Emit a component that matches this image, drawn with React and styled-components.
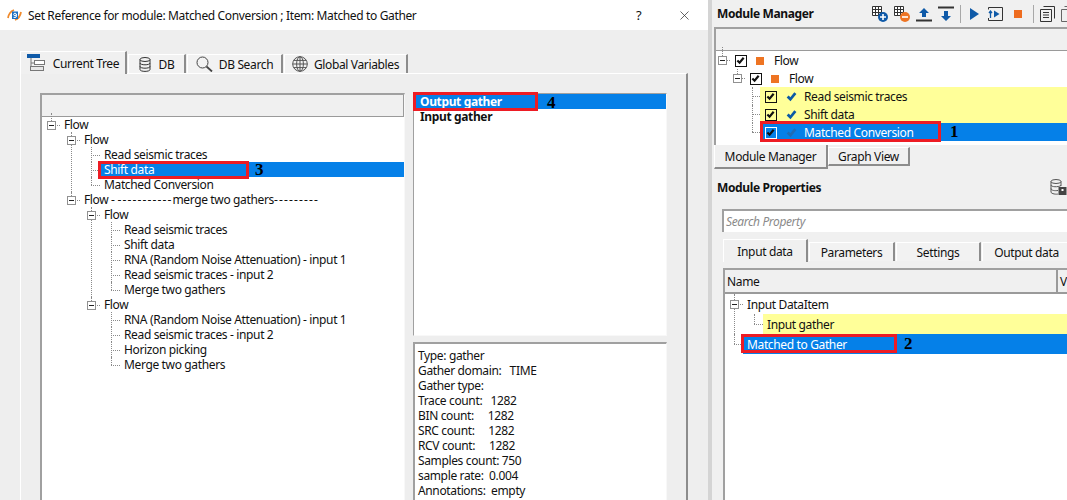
import React from 'react';
import styled, { createGlobalStyle } from 'styled-components';
import { X } from 'lucide-react';

const BLUE = '#0580e8';
const YELLOW = '#ffff99';
const RED = '#ed1c24';
const SUNKEN = '#a0a0a0';

const GlobalStyle = createGlobalStyle`
  html, body { margin: 0; padding: 0; background: #eee; }
  body {
    font-family: "Noto Sans", "Open Sans", sans-serif;
    font-size: 12px;
    letter-spacing: -0.36px;
    color: #111;
  }
  * { box-sizing: border-box; }
`;

const Page = styled.div`
  display: flex;
  width: 1067px;
  height: 500px;
  overflow: hidden;
`;

/* ---- left dialog ---- */

const Dialog = styled.div`
  flex: 0 0 708px;
  min-width: 0;
  background: #eee;
`;

const TitleBar = styled.div`
  display: flex;
  align-items: center;
  height: 30px;
  padding-left: 7px;
  background: #fff;
`;

const TitleText = styled.span`
  margin-left: 6px;
  flex: 1;
`;

const HelpMark = styled.span`
  width: 41px;
  font-size: 13px;
`;

const CloseButton = styled.span`
  display: flex;
  width: 31px;
  color: #333;
`;

const DialogBody = styled.div`
  padding: 20px 20px 0;
`;

const TabBar = styled.div`
  display: flex;
  align-items: flex-end;
  height: 23px;
`;

const Tab = styled.div`
  display: flex;
  align-items: center;
  justify-content: center;
  gap: ${p => p.$gap || 6}px;
  width: ${p => p.$width}px;
  height: ${p => (p.$active ? 23 : 19)}px;
  margin-right: 1px;
  background: ${p => (p.$active ? '#f0f0f0' : '#f2f2f2')};
  border-top: 1px solid #fff;
  border-left: 1px solid #fff;
  border-right: 2px solid #8c8c8c;
  position: relative;
  top: ${p => (p.$active ? 1 : 0)}px;
`;

const TabPane = styled.div`
  display: flex;
  gap: 8px;
  height: 460px;
  padding: 19px 19px 0;
  border-top: 1px solid #fff;
  border-left: 1px solid #fff;
  border-right: 2px solid #8c8c8c;
`;

const SunkenPanel = styled.div`
  background: #fff;
  border-top: 2px solid ${SUNKEN};
  border-left: 2px solid ${SUNKEN};
  border-right: 1px solid #f8f8f8;
  border-bottom: 1px solid #f8f8f8;
  overflow: hidden;
`;

const TreePanel = styled(SunkenPanel)`
  flex: 0 0 365px;
  height: 440px;
`;

const HeaderStrip = styled.div`
  height: 22px;
  background: #f0f0f0;
  border-right: 1px solid #9a9a9a;
  border-bottom: 1px solid #9a9a9a;
`;

const TreeBody = styled.div`
  padding-left: 2px;
`;

const ManagerTree = styled.div`
  margin-left: -1px;
`;

const MiddleColumn = styled.div`
  display: flex;
  flex-direction: column;
  gap: 6px;
  flex: 0 0 254px;
`;

const OutputList = styled(SunkenPanel)`
  height: 243px;
  overflow: visible;
  border-top-width: 1px;
  border-left-width: 1px;
`;

const OutputItem = styled.div`
  position: relative;
  height: 15px;
  line-height: 15px;
  padding-left: 6px;
  font-weight: 700;
  background: ${p => (p.$selected ? BLUE : 'transparent')};
  color: ${p => (p.$selected ? '#fff' : '#111')};
`;

const InfoPanel = styled(SunkenPanel)`
  flex: 1;
  padding: 4px 3px;
`;

const InfoLine = styled.div`
  height: 15px;
  line-height: 15px;
  white-space: pre;
`;

/* ---- callouts ---- */

const RedBox = styled.span`
  position: absolute;
  left: ${p => p.$left}px;
  top: ${p => p.$top}px;
  width: ${p => p.$width}px;
  height: ${p => p.$height}px;
  border: 3px solid ${RED};
  pointer-events: none;
`;

const StepNumber = styled.span`
  position: absolute;
  left: ${p => p.$left}px;
  top: 50%;
  transform: translateY(-50%);
  font-family: "Liberation Serif", serif;
  font-size: 17px;
  font-weight: 700;
  letter-spacing: 0;
  color: #000;
`;

/* ---- tree ---- */

const NodeWrap = styled.div`
  position: relative;
  &::before {
    content: "";
    position: absolute;
    left: ${p => p.$m.axis}px;
    top: ${p => (p.$root ? -4 : 0)}px;
    height: ${p => (p.$last ? `${p.$m.row / 2}px` : '100%')};
    border-left: 1px dotted #8a8a8a;
  }
`;

const NodeRow = styled.div`
  position: relative;
  display: flex;
  align-items: stretch;
  height: ${p => p.$m.row}px;
`;

const Gutter = styled.div`
  position: relative;
  flex: 0 0 ${p => p.$m.gutter}px;
  &::after {
    content: "";
    position: absolute;
    left: ${p => p.$m.axis}px;
    right: 0;
    top: 50%;
    border-top: 1px dotted #8a8a8a;
  }
`;

const Toggle = styled.span`
  position: absolute;
  z-index: 1;
  left: ${p => p.$m.axis - 4}px;
  top: 50%;
  width: 9px;
  height: 9px;
  margin-top: -4px;
  background: #fff;
  border: 1px solid #919191;
  &::after {
    content: "";
    position: absolute;
    left: 1px;
    right: 1px;
    top: 3px;
    border-top: 1px solid #222;
  }
`;

const NodeLabel = styled.div`
  position: relative;
  flex: 1;
  display: flex;
  align-items: center;
  min-width: 0;
  white-space: nowrap;
  padding-left: ${p => p.$m.pad}px;
  padding-top: ${p => p.$m.nudge || 0}px;
  background: ${p => (p.$state === 'selected' ? BLUE : p.$state === 'warn' ? YELLOW : 'transparent')};
  color: ${p => (p.$state === 'selected' ? '#fff' : '#111')};
`;

const NodeChildren = styled.div`
  margin-left: ${p => p.$m.indent}px;
`;

const CheckBox = styled.span`
  display: inline-flex;
  flex: 0 0 12px;
  width: 12px;
  height: 12px;
  margin-right: 9px;
  background: ${p => (p.$state ? 'transparent' : '#fff')};
  border: 1.5px solid ${p => (p.$state === 'selected' ? '#fff' : '#111')};
`;

const MarkSlot = styled.span`
  display: inline-flex;
  align-items: center;
  flex: 0 0 18px;
`;

const OrangeSquare = styled.span`
  width: 8px;
  height: 8px;
  background: #ee7423;
`;

const DashRun = styled.span`
  letter-spacing: 1.14px;
`;

const CheckGlyph = ({ color = '#111', width = 2, size = 9 }) => (
  <svg width={size} height={size} viewBox="0 0 10 10">
    <path d="M1.5 5 L4 7.5 L8.5 2" fill="none" stroke={color} strokeWidth={width} />
  </svg>
);

const TreeNode = ({ node, m, last, root }) => (
  <NodeWrap $m={m} $last={last} $root={root}>
    <NodeRow $m={m}>
      <Gutter $m={m}>{node.children && <Toggle $m={m} />}</Gutter>
      <NodeLabel $m={m} $state={node.state}>
        {node.checked && (
          <CheckBox $state={node.state}>
            <CheckGlyph width={2.4} />
          </CheckBox>
        )}
        {node.mark === 'orange' && (
          <MarkSlot>
            <OrangeSquare />
          </MarkSlot>
        )}
        {node.mark === 'check' && (
          <MarkSlot>
            <CheckGlyph color={node.state === 'selected' ? '#1f6cb5' : '#0b5aa5'} width={2.5} size={11} />
          </MarkSlot>
        )}
        <span>{node.label}</span>
        {node.callout && (
          <>
            <RedBox {...node.callout.box} />
            <StepNumber $left={node.callout.left}>{node.callout.step}</StepNumber>
          </>
        )}
      </NodeLabel>
    </NodeRow>
    {node.children && (
      <NodeChildren $m={m}>
        {node.children.map((c, i) => (
          <TreeNode key={i} node={c} m={m} last={i === node.children.length - 1} />
        ))}
      </NodeChildren>
    )}
  </NodeWrap>
);

const leaf = label => ({ label });

const refMetrics = { row: 15, axis: 7, gutter: 16, indent: 20, pad: 4 };
const refTree = {
  label: 'Flow',
  children: [
    {
      label: 'Flow',
      children: [
        leaf('Read seismic traces'),
        {
          label: 'Shift data',
          state: 'selected',
          callout: { step: '3', left: 155, box: { $left: -2, $top: -1, $width: 151, $height: 18 } },
        },
        leaf('Matched Conversion'),
      ],
    },
    {
      label: (
        <>
          Flow - <DashRun>-----------</DashRun>merge two gathers<DashRun>---------</DashRun>
        </>
      ),
      children: [
        {
          label: 'Flow',
          children: [
            leaf('Read seismic traces'),
            leaf('Shift data'),
            leaf('RNA (Random Noise Attenuation) - input 1'),
            leaf('Read seismic traces - input 2'),
            leaf('Merge two gathers'),
          ],
        },
        {
          label: 'Flow',
          children: [
            leaf('RNA (Random Noise Attenuation) - input 1'),
            leaf('Read seismic traces - input 2'),
            leaf('Horizon picking'),
            leaf('Merge two gathers'),
          ],
        },
      ],
    },
  ],
};

const moduleMetrics = { row: 18, axis: 7, gutter: 15, indent: 15, pad: 5, nudge: 1 };
const moduleTree = {
  label: 'Flow',
  checked: true,
  mark: 'orange',
  children: [
    {
      label: 'Flow',
      checked: true,
      mark: 'orange',
      children: [
        { label: 'Read seismic traces', checked: true, mark: 'check', state: 'warn' },
        { label: 'Shift data', checked: true, mark: 'check', state: 'warn' },
        {
          label: 'Matched Conversion',
          checked: true,
          mark: 'check',
          state: 'selected',
          callout: { step: '1', left: 190, box: { $left: 0, $top: -2, $width: 181, $height: 21 } },
        },
      ],
    },
  ],
};

const propMetrics = { row: 20, axis: 7, gutter: 16, indent: 20, pad: 4 };
const propTree = {
  label: 'Input DataItem',
  children: [{ label: 'Input gather', state: 'warn' }],
};
const matchedNode = {
  label: 'Matched to Gather',
  state: 'selected',
  callout: { step: '2', left: 161, box: { $left: -2, $top: 0, $width: 156, $height: 19 } },
};

/* ---- right column ---- */

const SidePanel = styled.div`
  flex: 1;
  min-width: 0;
  background: #f0f0f0;
  border-left: 4px solid #d4d4d4;
`;

const DockHeader = styled.div`
  display: flex;
  align-items: center;
  height: 27px;
  padding-left: 5px;
  font-weight: 700;
`;

const DockTitle = styled.span`
  flex: 0 0 155px;
`;

const Toolbar = styled.div`
  display: flex;
  align-items: center;
  gap: 6px;
`;

const ToolDivider = styled.span`
  width: 1px;
  height: 18px;
  background: #a8a8a8;
`;

const ManagerPanel = styled(SunkenPanel)`
  height: 118px;
  margin-left: 2px;
  margin-right: -10px;
  border-bottom: 0;
`;

const DockTabs = styled.div`
  display: flex;
  align-items: flex-start;
  height: 23px;
  margin-left: 2px;
`;

const DockTab = styled.div`
  display: flex;
  align-items: center;
  justify-content: center;
  width: ${p => p.$width}px;
  height: ${p => (p.$active ? 24 : 19)}px;
  margin-top: ${p => (p.$active ? 0 : 2)}px;
  background: #f0f0f0;
  border-top: ${p => (p.$active ? 0 : 1)}px solid #fff;
  border-left: 1px solid #fff;
  border-right: 2px solid #8c8c8c;
  border-bottom: 2px solid #8c8c8c;
`;

const PropsHeader = styled(DockHeader)`
  justify-content: space-between;
  height: 38px;
  padding-right: 0;
`;

const PropsBody = styled.div`
  padding-left: 10px;
`;

const SearchBox = styled.div`
  display: flex;
  align-items: center;
  height: 23px;
  padding-left: 2px;
  margin-top: 3px;
  font-style: italic;
  color: #8a8a8a;
  background: #fff;
  border-top: 2px solid ${SUNKEN};
  border-left: 2px solid ${SUNKEN};
`;

const PropsTabs = styled.div`
  display: flex;
  align-items: flex-end;
  height: 23px;
  margin-top: 6px;
  margin-left: 1px;
`;

const PropsTab = styled(Tab)`
  flex: 0 0 ${p => p.$width}px;
  margin-right: 1px;
`;

const PropsTable = styled(SunkenPanel)`
  height: 240px;
  margin-top: 7px;
  margin-right: -10px;
  margin-left: 1px;
`;

const ColumnHeader = styled.div`
  display: flex;
  height: 24px;
  background: #f0f0f0;
  border-bottom: 2px solid #9a9a9a;
`;

const ColumnCell = styled.div`
  display: flex;
  align-items: center;
  flex: 0 0 ${p => p.$width}px;
  padding-left: 2px;
  border-right: 2px solid #9a9a9a;
  overflow: hidden;
`;

const PropsTree = styled.div`
  padding-left: 2px;
`;

/* ---- icons ---- */

const AppIcon = () => (
  <svg width="15" height="14" viewBox="0 0 15 14">
    <path d="M1 10 Q2 4 7 2" fill="none" stroke="#f08a2c" strokeWidth="1.8" />
    <path d="M14 4 Q13 10 8 12" fill="none" stroke="#f08a2c" strokeWidth="1.8" />
    <rect x="5" y="3.5" width="6" height="7.5" fill="#1b6fc2" />
    <circle cx="8" cy="6.5" r="1.3" fill="none" stroke="#fff" />
    <path d="M9.3 6 V9 Q8 10 6.5 9.3" fill="none" stroke="#fff" />
  </svg>
);

const TreeTabIcon = () => (
  <svg width="20" height="18" viewBox="0 0 20 18">
    <rect x="0" y="0" width="13" height="4" fill="#0f5aa8" />
    <path d="M4 4 V15 M4 9 H7 M4 15 H7" fill="none" stroke="#777" />
    <rect x="7.5" y="6.5" width="10" height="4" fill="#fff" stroke="#777" />
    <rect x="3.5" y="12.5" width="13" height="4" fill="#e6e6e6" stroke="#777" />
  </svg>
);

const DbIcon = ({ size = 12 }) => (
  <svg width={size} height={size * 1.25} viewBox="0 0 12 15">
    <ellipse cx="6" cy="2.5" rx="5" ry="2" fill="none" stroke="#333" />
    <path d="M1 2.5 V12.5 C1 15 11 15 11 12.5 V2.5 M1 6 C1 8.4 11 8.4 11 6 M1 9.4 C1 11.8 11 11.8 11 9.4" fill="none" stroke="#333" />
  </svg>
);

const SearchIcon = () => (
  <svg width="17" height="16" viewBox="0 0 17 16">
    <circle cx="6.5" cy="6.5" r="5.5" fill="none" stroke="#444" />
    <path d="M10.5 10.5 L16 15.5" stroke="#444" strokeWidth="1.8" />
  </svg>
);

const GlobeIcon = () => (
  <svg width="16" height="16" viewBox="0 0 16 16" fill="none" stroke="#555">
    <circle cx="8" cy="8" r="7.3" />
    <ellipse cx="8" cy="8" rx="3.4" ry="7.3" />
    <path d="M8 .7 V15.3 M.7 8 H15.3 M1.8 4.4 H14.2 M1.8 11.6 H14.2" />
  </svg>
);

const AddRemoveIcon = ({ color, plus }) => (
  <svg width="16" height="16" viewBox="0 0 16 16">
    <path d="M.5.5 H9.5 V9.5 H.5 Z M.5 3.5 H9.5 M.5 6.5 H9.5 M3.5 .5 V9.5 M6.5 .5 V9.5" fill="#fff" stroke="#333" />
    <circle cx="11" cy="11" r="5" fill={color} />
    <path d={plus ? 'M8 11 H14 M11 8 V14' : 'M8 11 H14'} stroke="#fff" strokeWidth="1.6" />
  </svg>
);

const MoveIcon = ({ up }) => (
  <svg width="16" height="16" viewBox="0 0 16 16">
    {up ? (
      <>
        <path d="M8 2 L13 7 H10 V11 H6 V7 H3 Z" fill="#0f5aa8" />
        <rect x="0" y="13.5" width="16" height="2" fill="#333" />
      </>
    ) : (
      <>
        <rect x="0" y="0.5" width="16" height="2" fill="#333" />
        <path d="M8 15 L13 10 H10 V5 H6 V10 H3 Z" fill="#0f5aa8" />
      </>
    )}
  </svg>
);

const PlayGlyph = styled.svg`
  margin: 0 3px;
`;

const PlayIcon = () => (
  <PlayGlyph width="9" height="12" viewBox="0 0 9 12">
    <path d="M0 0 L9 6 L0 12 Z" fill="#0f5aa8" />
  </PlayGlyph>
);

const StepIcon = () => (
  <svg width="15" height="14" viewBox="0 0 15 14">
    <path d="M.5 2.5 V.5 H14.5 V13.5 H.5 V11" fill="none" stroke="#333" />
    <path d="M6 3.5 L11.5 7 L6 10.5 Z" fill="#0f5aa8" />
    <path d="M2.5 5 V11 M1 6 L2.5 4 L4 6" fill="none" stroke="#0f5aa8" strokeWidth="1.3" />
  </svg>
);

const StopGlyph = styled.span`
  width: 8px;
  height: 8px;
  margin: 0 5px;
  background: #ee6c1f;
`;

const ListIcon = () => (
  <svg width="15" height="16" viewBox="0 0 15 16" fill="none" stroke="#333">
    <path d="M3.5 .5 H14.5 V12.5 M.5 3.5 H11.5 V15.5 H.5 Z" />
    <path d="M3 6.5 H9 M3 9 H9 M3 11.5 H9" />
  </svg>
);

const PageIcon = () => (
  <svg width="14" height="16" viewBox="0 0 14 16" fill="none" stroke="#666">
    <path d="M3.5 .5 H14 M.5 3.5 H14 M.5 3.5 V15.5 H14" />
  </svg>
);

const DbLockIcon = () => (
  <svg width="17" height="17" viewBox="0 0 17 17">
    <ellipse cx="6" cy="2.5" rx="5" ry="2" fill="none" stroke="#555" />
    <path d="M1 2.5 V13 C1 15 7 15.5 8 15 M11 2.5 V7 M1 6 C1 8 8 8.4 11 6.5 M1 9.5 C1 11.5 5 12 8 11.5" fill="none" stroke="#555" />
    <rect x="8.5" y="8" width="8" height="8" fill="#444" />
    <rect x="11.5" y="10" width="2" height="2" fill="#fff" />
  </svg>
);

const infoLines = [
  'Type: gather',
  'Gather domain:   TIME',
  'Gather type:',
  'Trace count:   1282',
  'BIN count:     1282',
  'SRC count:     1282',
  'RCV count:     1282',
  'Samples count: 750',
  'sample rate:  0.004',
  'Annotations:  empty',
];

export default function App() {
  return (
    <Page>
      <GlobalStyle />
      <Dialog>
        <TitleBar>
          <AppIcon />
          <TitleText>Set Reference for module: Matched Conversion ; Item: Matched to Gather</TitleText>
          <HelpMark>?</HelpMark>
          <CloseButton>
            <X size={15} strokeWidth={1.2} />
          </CloseButton>
        </TitleBar>
        <DialogBody>
          <TabBar>
            <Tab $active $width={107}>
              <TreeTabIcon />
              Current Tree
            </Tab>
            <Tab $width={58} $gap={8}>
              <DbIcon />
              DB
            </Tab>
            <Tab $width={96}>
              <SearchIcon />
              DB Search
            </Tab>
            <Tab $width={124}>
              <GlobeIcon />
              Global Variables
            </Tab>
          </TabBar>
          <TabPane>
            <TreePanel>
              <HeaderStrip />
              <TreeBody>
                <TreeNode node={refTree} m={refMetrics} last root />
              </TreeBody>
            </TreePanel>
            <MiddleColumn>
              <OutputList>
                <OutputItem $selected>
                  Output gather
                  <RedBox $left={-1} $top={-2} $width={125} $height={19} />
                  <StepNumber $left={133}>4</StepNumber>
                </OutputItem>
                <OutputItem>Input gather</OutputItem>
              </OutputList>
              <InfoPanel>
                {infoLines.map(line => (
                  <InfoLine key={line}>{line}</InfoLine>
                ))}
              </InfoPanel>
            </MiddleColumn>
          </TabPane>
        </DialogBody>
      </Dialog>

      <SidePanel>
        <DockHeader>
          <DockTitle>Module Manager</DockTitle>
          <Toolbar>
            <AddRemoveIcon color="#0f5aa8" plus />
            <AddRemoveIcon color="#ee7423" />
            <MoveIcon up />
            <MoveIcon />
            <ToolDivider />
            <PlayIcon />
            <StepIcon />
            <StopGlyph />
            <ToolDivider />
            <ListIcon />
            <PageIcon />
          </Toolbar>
        </DockHeader>
        <ManagerPanel>
          <HeaderStrip />
          <ManagerTree>
            <TreeNode node={moduleTree} m={moduleMetrics} last root />
          </ManagerTree>
        </ManagerPanel>
        <DockTabs>
          <DockTab $active $width={114}>
            Module Manager
          </DockTab>
          <DockTab $width={82}>Graph View</DockTab>
        </DockTabs>
        <PropsHeader>
          Module Properties
          <DbLockIcon />
        </PropsHeader>
        <PropsBody>
          <SearchBox>Search Property</SearchBox>
          <PropsTabs>
            <PropsTab $active $width={85}>
              Input data
            </PropsTab>
            <PropsTab $width={86}>Parameters</PropsTab>
            <PropsTab $width={85}>Settings</PropsTab>
            <PropsTab $width={90}>Output data</PropsTab>
          </PropsTabs>
          <PropsTable>
            <ColumnHeader>
              <ColumnCell $width={333}>Name</ColumnCell>
              <ColumnCell $width={30}>V</ColumnCell>
            </ColumnHeader>
            <PropsTree>
              <TreeNode node={propTree} m={propMetrics} />
              <TreeNode node={matchedNode} m={propMetrics} last />
            </PropsTree>
          </PropsTable>
        </PropsBody>
      </SidePanel>
    </Page>
  );
}
